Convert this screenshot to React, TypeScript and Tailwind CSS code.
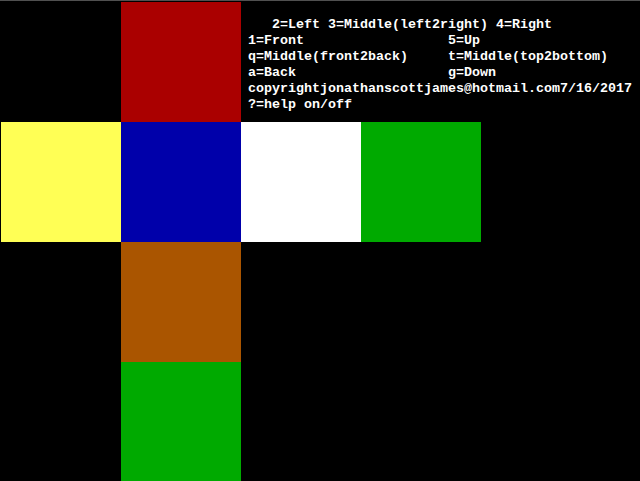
import React from 'react';

// EGA-ish palette used by the cube net
const faces = {
  up: 'bg-[#aa0000]',
  left: 'bg-[#ffff55]',
  front: 'bg-[#0000aa]',
  right: 'bg-white',
  back: 'bg-[#00aa00]',
  down: 'bg-[#aa5500]',
  bottom: 'bg-[#00aa00]',
};

const helpLines = [
  '   2=Left 3=Middle(left2right) 4=Right',
  '1=Front                  5=Up',
  'q=Middle(front2back)     t=Middle(top2bottom)',
  'a=Back                   g=Down',
  'copyrightjonathanscottjames@hotmail.com7/16/2017',
  '?=help on/off',
];

const Cell = ({ color }: { color?: string }) => (
  <div className={`w-[120px] h-[120px] shrink-0 ${color ?? ''}`} />
);

const App = () => {
  return (
    <div className="w-[640px] h-[481px] overflow-hidden bg-black">
      <div className="h-px bg-[#505050]" />
      <div className="pt-px pl-px flex flex-col">
        <div className="flex">
          <Cell />
          <Cell color={faces.up} />
          <div
            className="pl-[7px] pt-[15px] text-white font-bold text-[13.333px] leading-4 whitespace-pre"
            style={{ fontFamily: '"Liberation Mono", "DejaVu Sans Mono", monospace' }}
          >
            {helpLines.map((line, i) => (
              <div key={i}>{line}</div>
            ))}
          </div>
        </div>
        <div className="flex">
          <Cell color={faces.left} />
          <Cell color={faces.front} />
          <Cell color={faces.right} />
          <Cell color={faces.back} />
        </div>
        <div className="flex">
          <Cell />
          <Cell color={faces.down} />
        </div>
        <div className="flex">
          <Cell />
          <Cell color={faces.bottom} />
        </div>
      </div>
    </div>
  );
};

export default App;
